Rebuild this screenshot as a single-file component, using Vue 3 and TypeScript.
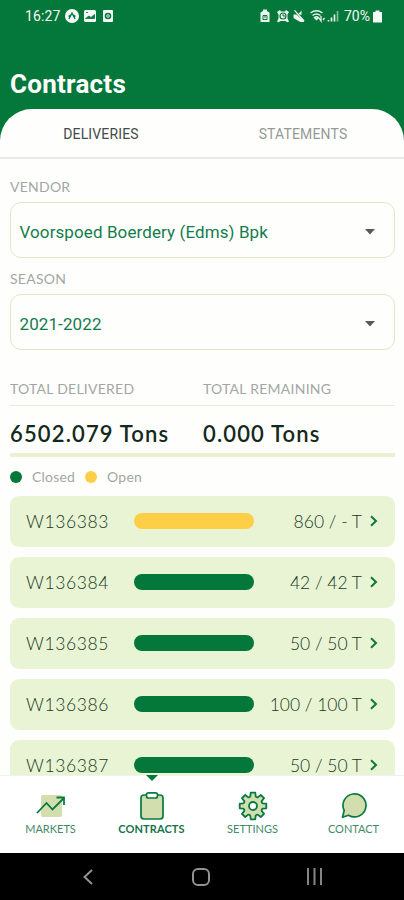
<script setup lang="ts">
interface Contract { id: string; amount: string; open?: boolean }
const contracts: Contract[] = [
  { id: 'W136383', amount: '860 / - T', open: true },
  { id: 'W136384', amount: '42 / 42 T' },
  { id: 'W136385', amount: '50 / 50 T' },
  { id: 'W136386', amount: '100 / 100 T' },
  { id: 'W136387', amount: '50 / 50 T' },
]
const fields = [
  { label: 'VENDOR', value: 'Voorspoed Boerdery (Edms) Bpk', kind: 'vendor' },
  { label: 'SEASON', value: '2021-2022', kind: 'season' },
]
// Eight-toothed gear outline, centred on 15,15
const gear = Array.from({ length: 8 }, (_, i) => {
  const at = (r: number, deg: number) => {
    const a = ((deg + i * 45) * Math.PI) / 180
    return `${(15 + r * Math.cos(a)).toFixed(2)} ${(15 + r * Math.sin(a)).toFixed(2)}`
  }
  return `${i === 0 ? 'M' : 'L'}${at(10.2, -15)} L${at(13.5, -10)} L${at(13.5, 10)} L${at(10.2, 15)} Q${at(8.8, 22.5)} ${at(10.2, 30)}`
}).join(' ') + 'Z'
</script>

<template>
  <div class="screen">
    <header class="top">
      <div class="status">
        <span class="clock">16:27</span>
        <svg class="st-left" width="49" height="14" viewBox="0 0 49 14">
          <circle cx="7" cy="7" r="7" fill="#f4faf5" />
          <path d="M4 10 7 4l3 6M3.5 7.5 5.5 6M10.500 7.500 8.500 6" fill="none" stroke="#04783a" stroke-width="1.300" />
          <rect x="19" y="1" width="12" height="12" rx="1.500" fill="#f4faf5" />
          <path d="M20.500 9.500 24 7l2 1.500 3.500-3V9.500ZM21 3.500h2" fill="#04783a" stroke="#04783a" stroke-width=".8" />
          <rect x="38" y="1" width="10" height="12" rx="1" fill="#f4faf5" />
          <circle cx="43" cy="7" r="2.500" fill="none" stroke="#04783a" stroke-width="1.600" />
          <path d="M42 7h2" stroke="#04783a" />
        </svg>
        <svg class="st-right" width="80" height="14" viewBox="0 0 80 14">
          <g fill="#eef7ef">
            <path d="M3 2V.5h4V2l2.500 1.500V13H.5V3.500Z" />
            <path d="m17 3 3-2 1 1.500h4L26 1l3 2-1.500 2.500v4L29 12.500l-1.500.8-2-1.300h-5l-2 1.300-1.500-.8 1.500-3v-4Z" />
            <path d="M33.500 5.500h3L44 13h-3.500l-2-1-5-3ZM38.500 5l3-3.500V6ZM34 1.500l1-.5 9.500 10.500-1 1.500Z" />
          </g>
          <path d="M3 6.500h4v4H3ZM5 6v3" fill="none" stroke="#04783a" />
          <circle cx="23" cy="7" r="3" fill="none" stroke="#04783a" stroke-width="1.200" />
          <path d="M23 5v2h2" fill="none" stroke="#04783a" />
          <path d="M50.500 4q6-4.500 12 0M52.500 6.500q4-3 8 0M54.500 8.500q2-1.500 4 0l-2 2Z" fill="none" stroke="#e7f4e9" stroke-width="1.500" />
          <path d="m59 9 2 3V7m2 4 1.500-2" fill="none" stroke="#e7f4e9" stroke-width="1.300" />
          <path d="M68.500 12.500V11M71.500 12.500V8.500M74.500 12.500V5.500" stroke="#e7f4e9" stroke-width="1.700" />
          <path d="M77.500 12.500V2" stroke="#82b997" stroke-width="1.700" />
        </svg>
        <span class="battery">70%</span>
        <svg width="9" height="13" viewBox="0 0 9 13"><path d="M2.500 2V.5h4V2H9v10.500H0V2Z" fill="#f4faf5" /></svg>
      </div>
      <h1>Contracts</h1>
    </header>

    <main class="sheet">
      <nav class="tabs">
        <span class="tab active">DELIVERIES</span>
        <span class="tab">STATEMENTS</span>
      </nav>
      <section class="content">
        <div v-for="f in fields" :key="f.label" class="field">
          <div class="label">{{ f.label }}</div>
          <div class="select">
            <span :class="f.kind">{{ f.value }}</span>
            <svg width="10" height="6" viewBox="0 0 10 6"><path d="M0 0h10L5 5.500Z" fill="#555b57" /></svg>
          </div>
        </div>
        <div class="totals">
          <div class="label">TOTAL DELIVERED</div>
          <div class="label">TOTAL REMAINING</div>
        </div>
        <div class="values">
          <div class="value">6502.079 Tons</div>
          <div class="value">0.000 Tons</div>
        </div>
        <div class="legend">
          <i class="dot"></i><span>Closed</span>
          <i class="dot open"></i><span>Open</span>
        </div>
        <div class="list">
          <div v-for="c in contracts" :key="c.id" class="row">
            <span class="id">{{ c.id }}</span>
            <span class="bar" :class="{ open: c.open }"></span>
            <span class="amount">{{ c.amount }}</span>
            <svg width="8" height="12" viewBox="0 0 8 12"><path d="m1 1.200 5 4.800-5 4.800" fill="none" stroke="#0a7a3c" stroke-width="2" /></svg>
          </div>
        </div>
      </section>
    </main>

    <nav class="bottom">
      <svg class="marker" width="12" height="6" viewBox="0 0 12 6"><path d="M0 0h12L6 6Z" fill="#04783a" /></svg>
      <div class="item markets">
        <svg width="30" height="30" viewBox="0 0 30 30">
          <rect x="5" y="4" width="21" height="22" rx="2" fill="#d3deae" />
          <path d="m1 22 9.500-10 6 6.500L28 7M20.500 6.500H28V14" fill="none" stroke="#087a40" stroke-width="1.800" />
        </svg>
        <span>MARKETS</span>
      </div>
      <div class="item contracts">
        <svg width="30" height="30" viewBox="0 0 30 30">
          <rect x="4" y="4" width="22" height="24" rx="3" fill="#d3deae" stroke="#087a40" stroke-width="1.700" />
          <rect x="9.500" y="1.800" width="11" height="5.200" rx="2" fill="#fff" stroke="#087a40" stroke-width="1.700" />
        </svg>
        <span>CONTRACTS</span>
      </div>
      <div class="item settings">
        <svg width="30" height="30" viewBox="0 0 30 30">
          <path :d="gear" fill="#d3deae" stroke="#087a40" stroke-width="1.800" stroke-linejoin="round" />
          <circle cx="15" cy="15" r="4" fill="#fff" stroke="#087a40" stroke-width="1.800" />
        </svg>
        <span>SETTINGS</span>
      </div>
      <div class="item contact">
        <svg width="30" height="30" viewBox="0 0 30 30">
          <path d="M5.200 19.500A11.500 11.500 0 1 1 9.500 24.200L3.500 26.300Z" fill="#d3deae" stroke="#087a40" stroke-width="1.700" stroke-linejoin="round" />
        </svg>
        <span>CONTACT</span>
      </div>
    </nav>

    <footer class="system">
      <svg width="10" height="16" viewBox="0 0 10 16"><path d="M9 1 1.500 8 9 15" fill="none" stroke="#929292" stroke-width="2" /></svg>
      <svg width="18" height="18" viewBox="0 0 18 18"><rect x="1" y="1" width="16" height="16" rx="5" fill="none" stroke="#929292" stroke-width="2" /></svg>
      <svg class="recents" width="17" height="17" viewBox="0 0 17 17"><path d="M2 0v17M8.500 0v17M15 0v17" stroke="#858585" stroke-width="2" /></svg>
    </footer>
  </div>
</template>

<style>
body { margin: 0; }
</style>

<style scoped>
.screen { width: 404px; height: 900px; display: flex; flex-direction: column; overflow: hidden; background: #04783a; font-family: Lato, "Open Sans", sans-serif; white-space: nowrap; }
.screen svg { display: block; flex: none; }
.top { height: 109px; flex: none; color: #f3faf4; font-family: Roboto, sans-serif; }
.status { height: 32px; display: flex; align-items: center; padding: 0 22px 0 25px; font-size: 14px; }
.clock { width: 40px; letter-spacing: .1px; }
.st-right { margin-left: auto; }
.battery { margin-left: 4px; width: 29px; }
h1 { margin: 36px 0 0 10px; font-size: 26px; line-height: 32px; font-weight: 700; letter-spacing: .25px; color: #fff; }
.sheet { height: 666px; flex: none; overflow: hidden; background: #fefffd; border-radius: 32px 32px 0 0; }
.tabs { height: 48px; display: flex; border-bottom: 2px solid #e8ebe8; font: 14px/50px Roboto, sans-serif; color: #969996; }
.tab { flex: 1; text-align: center; letter-spacing: .15px; }
.tab.active { color: #454b47; }
.content { padding: 19px 9px 0 10px; }
.field { height: 92px; }
.label { font-size: 14px; line-height: 18px; letter-spacing: .25px; color: #a3a7a3; }
.select { height: 56px; box-sizing: border-box; margin: 6px 0 0 -.5px; border: 1px solid #e1e7c8; border-radius: 11px; display: flex; align-items: center; justify-content: space-between; padding: 4px 19px 0 9px; font: 17px/22px Roboto, sans-serif; color: #147c4b; }
.vendor { letter-spacing: .1px; }
.season { letter-spacing: .1px; }
.totals { display: grid; grid-template-columns: 193px 1fr; height: 25px; margin-top: 18px; border-bottom: 1px solid #e6edd2; }
.values { display: grid; grid-template-columns: 193px 1fr; height: 47px; border-bottom: 4px solid #e8f1d1; }
.value { font-size: 22px; line-height: 55px; font-weight: 600; letter-spacing: 1.15px; color: #14291b; }
.legend { height: 39px; display: flex; align-items: center; font-size: 14px; letter-spacing: .2px; color: #a3a7a3; }
.dot { width: 12px; height: 12px; border-radius: 50%; background: #04783a; margin-right: 10px; }
.dot.open { background: #fdcf47; margin-left: 10px; }
.list { display: flex; flex-direction: column; gap: 10px; }
.row { height: 51px; flex: none; box-sizing: border-box; border-radius: 9px; background: #e9f4d4; display: flex; align-items: center; padding: 0 17px 1px 16px; font-size: 17.500px; line-height: 25px; font-weight: 300; color: #17381f; }
.id { width: 108px; letter-spacing: .6px; padding-top: 1px; }
.bar { width: 120px; height: 16px; border-radius: 8px; background: #04783a; }
.bar.open { background: #fdcf47; }
.amount { margin-left: auto; margin-right: 8px; padding-top: 1px; }
.bottom { position: relative; height: 78px; flex: none; background: #fff; border-top: 1px solid #f0f2ee; box-sizing: border-box; display: grid; grid-template-columns: repeat(4, 1fr); }
.marker { position: absolute; left: 146px; top: -1px; }
.item { display: flex; flex-direction: column; align-items: center; padding-top: 15px; font-size: 11px; line-height: 16px; color: #438a69; }
.item.contracts { font-weight: 700; letter-spacing: .1px; color: #18734a; }
.system { height: 47px; flex: none; background: #000; display: grid; grid-template-columns: 176px 50px 1fr; align-items: center; justify-items: center; }
.recents { justify-self: start; margin-left: 80px; }
</style>
